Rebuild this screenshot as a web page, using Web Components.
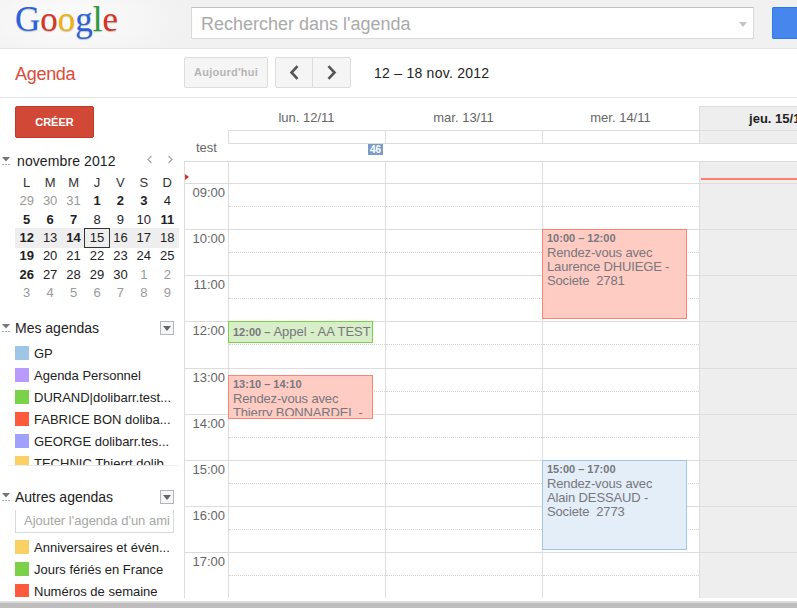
<!DOCTYPE html>
<html lang="fr">
<head>
<meta charset="utf-8">
<title>Agenda</title>
<style>
  html, body { margin: 0; height: 608px; overflow: hidden; background: #fff; }
  body { font-family: "Liberation Sans", Arial, sans-serif; font-size: 13px; color: #222; }
</style>
</head>
<body>
<g-app></g-app>

<script>
class GTopbar extends HTMLElement {
  connectedCallback() {
    this.attachShadow({ mode: 'open' });
    this.shadowRoot.innerHTML = `
      <style>
        :host {
          display: flex;
          box-sizing: border-box;
          height: 49px;
          padding: 0 0 0 15px;
          overflow: hidden;
          background: radial-gradient(ellipse 120px 50px at 70px 20px, #fcfcfc, #f1f1f1);
          border-bottom: 1px solid #e5e5e5;
        }
        .logo {
          flex: none;
          width: 176px;
          font: 35px/39px "Liberation Serif", serif;
          text-shadow: 0 1px 1px rgba(0, 0, 0, 0.22);
        }
        .search {
          display: flex;
          flex: none;
          align-items: center;
          justify-content: space-between;
          box-sizing: border-box;
          width: 563px;
          height: 32px;
          margin-top: 7px;
          padding: 2px 5px 0 9px;
          background: #fff;
          border: 1px solid #d9d9d9;
          border-top-color: #c0c0c0;
          font-size: 18px;
          color: #aaa;
        }
        .caret {
          width: 0;
          height: 0;
          margin-right: 1px;
          border: 4px solid transparent;
          border-top: 5px solid #c4c4c4;
          border-bottom: 0;
        }
        .go {
          flex: none;
          width: 40px;
          height: 32px;
          margin: 7px 0 0 18px;
          background: #4787ed;
          border-radius: 2px;
          box-shadow: inset 0 0 0 1px #3079ed;
        }
      </style>
      <div class="logo"><span style="color:#2b62d9">G</span><span style="color:#d9341f">o</span><span style="color:#f0b20f">o</span><span style="color:#2b62d9">g</span><span style="color:#2d9a3e">l</span><span style="color:#d9341f">e</span></div>
      <div class="search"><span>Rechercher dans l'agenda</span><i class="caret"></i></div>
      <div class="go"></div>
    `;
  }
}

class GSubbar extends HTMLElement {
  connectedCallback() {
    this.attachShadow({ mode: 'open' });
    this.shadowRoot.innerHTML = `
      <style>
        :host {
          display: flex;
          align-items: center;
          box-sizing: border-box;
          height: 49px;
          padding: 0 0 2px 15px;
          background: #fff;
          border-bottom: 1px solid #e5e5e5;
        }
        .name {
          width: 169px;
          margin-top: 5px;
          font-size: 18px;
          letter-spacing: -0.3px;
          color: #dd4b39;
        }
        .btn {
          display: flex;
          align-items: center;
          justify-content: center;
          box-sizing: border-box;
          height: 31px;
          background: #f5f5f5;
          border: 1px solid #dcdcdc;
          border-radius: 2px;
        }
        .today {
          width: 84px;
          font-size: 11px;
          font-weight: bold;
          letter-spacing: 0.25px;
          color: #b5b5b5;
        }
        .nav { width: 38px; margin-left: 7px; border-radius: 2px 0 0 2px; }
        .nav + .nav { margin-left: -1px; width: 39px; border-radius: 0 2px 2px 0; }
        .date {
          margin: 2px 0 0 23px;
          font-size: 14px;
          letter-spacing: 0.25px;
          color: #222;
        }
      </style>
      <div class="name">Agenda</div>
      <div class="btn today">Aujourd'hui</div>
      <div class="btn nav"><svg width="10" height="15" viewBox="0 0 10 15"><path d="M8.5 1.2 2.5 7.5l6 6.3" fill="none" stroke="#555" stroke-width="2.6"/></svg></div>
      <div class="btn nav"><svg width="10" height="15" viewBox="0 0 10 15"><path d="M1.5 1.2l6 6.3-6 6.3" fill="none" stroke="#555" stroke-width="2.6"/></svg></div>
      <div class="date">12 – 18 nov. 2012</div>
    `;
  }
}

class GMinical extends HTMLElement {
  connectedCallback() {
    // [jour, classe] : o = autre mois, b = gras, t = aujourd'hui
    const weeks = [
      ['29o', '30o', '31o', '1b', '2b', '3b', '4'],
      ['5b', '6b', '7b', '8', '9', '10', '11b'],
      ['12b', '13', '14b', '15t', '16', '17', '18'],
      ['19b', '20', '21', '22', '23', '24', '25'],
      ['26b', '27', '28', '29', '30', '1o', '2o'],
      ['3o', '4o', '5o', '6o', '7o', '8o', '9o']
    ];
    const rows = weeks.map((week, i) => {
      const cells = week.map(d => {
        const num = parseInt(d, 10);
        const cls = d.replace(String(num), '');
        return `<span class="${cls}">${num}</span>`;
      }).join('');
      return `<div class="row ${i === 2 ? 'cur' : ''}">${cells}</div>`;
    }).join('');

    this.attachShadow({ mode: 'open' });
    this.shadowRoot.innerHTML = `
      <style>
        :host {
          display: block;
          margin-top: 14px;
        }
        .head {
          display: flex;
          align-items: center;
          height: 18px;
          padding-left: 2px;
          margin-bottom: 4px;
          font-size: 14px;
          color: #222;
        }
        .head svg { flex: none; }
        .title { flex: 1; margin-left: 7px; letter-spacing: 0.1px; }
        .arrows { display: flex; gap: 14px; margin-right: 10px; margin-top: -4px; }
        .row {
          display: grid;
          grid-template-columns: repeat(7, 1fr);
          width: 164px;
          height: 18.34px;
          margin-left: 15px;
          line-height: 18px;
          text-align: center;
          color: #222;
        }
        .row span { display: block; }
        .days { color: #333; font-size: 13px; }
        .cur { background: #eee; box-shadow: 0 1px #eee, 0 -1px #eee; }
        .o { color: #999; }
        .b { font-weight: bold; }
        .t { outline: 1px solid #333; }
      </style>
      <div class="head">
        <svg width="8" height="10" viewBox="0 0 8 10"><path d="M0 1h8L4 5.5z" fill="#777"/><path d="M0 8.5h8" stroke="#aaa" stroke-dasharray="2 1"/></svg>
        <span class="title">novembre 2012</span>
        <div class="arrows">
          <svg width="7" height="9" viewBox="0 0 7 9"><path d="M5.5 1 2 4.5 5.5 8" fill="none" stroke="#aaa" stroke-width="1.4"/></svg>
          <svg width="7" height="9" viewBox="0 0 7 9"><path d="M1.5 1 5 4.5 1.5 8" fill="none" stroke="#aaa" stroke-width="1.4"/></svg>
        </div>
      </div>
      <div class="row days"><span>L</span><span>M</span><span>M</span><span>J</span><span>V</span><span>S</span><span>D</span></div>
      ${rows}
    `;
  }
}

class GCalSection extends HTMLElement {
  connectedCallback() {
    this.attachShadow({ mode: 'open' });
    this.shadowRoot.innerHTML = `
      <style>
        :host {
          display: block;
          margin-top: var(--top, 0);
        }
        .head {
          display: flex;
          align-items: center;
          height: 14px;
          padding-left: 2px;
          font-size: 14px;
          line-height: 14px;
          color: #222;
        }
        .head > svg { flex: none; margin-right: 5px; }
        .title { flex: 1; }
        .menu {
          display: flex;
          align-items: center;
          justify-content: center;
          box-sizing: border-box;
          width: 14px;
          height: 14px;
          margin-right: 10px;
          background: #f6f6f6;
          border: 1px solid #b4b4bc;
        }
        .menu i {
          width: 0;
          height: 0;
          border: 4px solid transparent;
          border-top: 5px solid #666;
          border-bottom: 0;
        }
      </style>
      <div class="head">
        <svg width="8" height="10" viewBox="0 0 8 10"><path d="M0 1h8L4 5.5z" fill="#777"/><path d="M0 8.5h8" stroke="#aaa" stroke-dasharray="2 1"/></svg>
        <span class="title">${this.getAttribute('label')}</span>
        <div class="menu"><i></i></div>
      </div>
      <slot></slot>
    `;
  }
}

class GCalItem extends HTMLElement {
  connectedCallback() {
    this.attachShadow({ mode: 'open' });
    this.shadowRoot.innerHTML = `
      <style>
        :host {
          display: flex;
          align-items: center;
          height: 22px;
          padding-left: 15px;
          white-space: nowrap;
          font-size: 13px;
          color: #222;
        }
        .sw {
          flex: none;
          width: 14px;
          height: 14px;
          margin-right: 5px;
          background: ${this.getAttribute('color')};
        }
      </style>
      <span class="sw"></span><slot></slot>
    `;
  }
}

class GSidebar extends HTMLElement {
  connectedCallback() {
    this.attachShadow({ mode: 'open' });
    this.shadowRoot.innerHTML = `
      <style>
        :host {
          display: block;
          flex: none;
          box-sizing: border-box;
          width: 184px;
          height: 499px;
          padding-top: 8px;
          overflow: hidden;
        }
        .create {
          display: flex;
          align-items: center;
          justify-content: center;
          box-sizing: border-box;
          width: 79px;
          height: 32px;
          margin-left: 15px;
          background: #d14836;
          border: 1px solid #c53727;
          border-radius: 2px;
          font-size: 11px;
          font-weight: bold;
          color: #fff;
        }
        .scroll {
          height: 123px;
          margin-top: 7px;
          overflow: hidden;
        }
        .fade {
          height: 1px;
          margin: 0 4px 0 8px;
          background: linear-gradient(90deg, #f4f4f4, #e2e2e2 20%, #e2e2e2 80%, #f4f4f4);
        }
        .add {
          box-sizing: border-box;
          width: 159px;
          height: 23px;
          margin: 6px 0 3px 15px;
          padding-left: 8px;
          border: 1px solid #d9d9d9;
          border-top: 0;
          line-height: 22px;
          font-size: 13px;
          color: #a6a6a6;
          white-space: nowrap;
          overflow: hidden;
        }
        g-calsection.mine { --top: 19px; }
        g-calsection.other { --top: 24px; }
      </style>
      <div class="create">CRÉER</div>
      <g-minical></g-minical>
      <g-calsection class="mine" label="Mes agendas">
        <div class="scroll">
          <g-calitem color="#9fc6e7">GP</g-calitem>
          <g-calitem color="#b99aff">Agenda Personnel</g-calitem>
          <g-calitem color="#7bd148">DURAND|dolibarr.test...</g-calitem>
          <g-calitem color="#ff5a3c">FABRICE BON doliba...</g-calitem>
          <g-calitem color="#a0a0ff">GEORGE dolibarr.tes...</g-calitem>
          <g-calitem color="#fad165">TECHNIC Thierrt dolib</g-calitem>
        </div>
        <div class="fade"></div>
      </g-calsection>
      <g-calsection class="other" label="Autres agendas">
        <div class="add">Ajouter l'agenda d'un ami</div>
        <g-calitem color="#fad165">Anniversaires et évén...</g-calitem>
        <g-calitem color="#7bd148">Jours fériés en France</g-calitem>
        <g-calitem color="#ff5a3c">Numéros de semaine</g-calitem>
      </g-calsection>
    `;
  }
}

// hauteur de chaque tranche : la premiere est coupee, 12h-13h fait un pixel de plus
const SLOT_HEIGHTS = [22, 46, 46, 46, 47, 46, 46, 46, 46, 46];

class GWeekCol extends HTMLElement {
  connectedCallback() {
    const slots = SLOT_HEIGHTS.map((h, i) =>
      `<div class="hour" style="height:${h}px">${i ? '<div class="half"></div>' : ''}</div>`
    ).join('');
    this.attachShadow({ mode: 'open' });
    this.shadowRoot.innerHTML = `
      <style>
        :host {
          display: block;
          position: relative;
          flex: none;
          box-sizing: border-box;
          width: 157px;
          border-left: 1px solid #ddd;
        }
        :host([today]) { background: #eee; }
        :host([today]) .half { border-bottom-color: transparent; }
        .hour { box-sizing: border-box; border-top: 1px solid #ddd; }
        .half { box-sizing: border-box; height: 23px; border-bottom: 1px dotted #d4d4d4; }
      </style>
      ${slots}
      <slot></slot>
    `;
  }
}

class GEvent extends HTMLElement {
  connectedCallback() {
    this.attachShadow({ mode: 'open' });
    this.shadowRoot.innerHTML = `
      <style>
        :host {
          display: block;
          position: absolute;
          left: -1px;
          top: ${this.getAttribute('top')}px;
          box-sizing: border-box;
          width: 145px;
          height: ${this.getAttribute('h')}px;
          padding: 1px 4px 2px;
          background: ${this.getAttribute('bg')};
          border: 1px solid ${this.getAttribute('line')};
          overflow: hidden;
          font-size: 13px;
          line-height: 14px;
          letter-spacing: -0.15px;
          color: #77777c;
        }
        :host([inline]) { padding-top: 3px; white-space: nowrap; padding-right: 0; letter-spacing: 0; }
        .clip { height: 100%; overflow: hidden; white-space: pre-wrap; }
        :host([inline]) .clip { white-space: pre; }
        b { font-size: 11px; display: block; margin-bottom: 1px; letter-spacing: 0; }
        :host([inline]) b { display: inline; margin: 0; }
      </style>
      <div class="clip"><b>${this.getAttribute('time')}</b><slot></slot></div>
    `;
  }
}

class GWeek extends HTMLElement {
  connectedCallback() {
    const hours = ['09', '10', '11', '12', '13', '14', '15', '16', '17'];
    const gutter = SLOT_HEIGHTS.map((h, i) => {
      const label = i > 0 && hours[i - 1] ? `${hours[i - 1]}:00` : '';
      return `<div class="tick" style="height:${h}px">${label}</div>`;
    }).join('');

    this.attachShadow({ mode: 'open' });
    this.shadowRoot.innerHTML = `
      <style>
        :host {
          display: block;
          position: relative;
          flex: 1;
          min-width: 0;
          overflow: hidden;
        }
        .top { display: flex; height: 63px; }
        .corner {
          flex: none;
          box-sizing: border-box;
          width: 44px;
          padding: 42px 0 0 12px;
          line-height: 16px;
          color: #666;
        }
        .right { position: relative; flex: none; width: 628px; }
        .labels { display: flex; height: 33px; border-bottom: 0; }
        .label {
          box-sizing: border-box;
          width: 157px;
          height: 33px;
          padding-top: 12px;
          line-height: 16px;
          text-align: center;
          color: #666;
          border-bottom: 1px solid #ddd;
        }
        .label.today {
          height: 25px;
          margin-top: 8px;
          padding-top: 4px;
          background: #eee;
          border-top: 1px solid #ddd;
          border-left: 1px solid #ddd;
          font-weight: bold;
          color: #222;
        }
        .allday { display: flex; height: 12px; border-bottom: 1px solid #ddd; }
        .allday div { box-sizing: border-box; width: 157px; border-left: 1px solid #ddd; }
        .allday .today { background: #eee; }
        .badge {
          position: absolute;
          left: 140px;
          top: 46px;
          width: 15px;
          height: 11px;
          background: #7a9cc6;
          font-size: 10px;
          font-weight: bold;
          line-height: 11px;
          text-align: center;
          color: #fff;
        }
        .body {
          position: relative;
          display: flex;
          height: 437px;
          overflow: hidden;
          border-left: 1px solid #ddd;
        }
        .gutter { flex: none; width: 43px; }
        .tick {
          box-sizing: border-box;
          padding: 1px 3px 0 0;
          border-top: 1px solid #ddd;
          line-height: 16px;
          text-align: right;
          color: #666;
        }
        .marker {
          position: absolute;
          left: 0;
          top: 13px;
          width: 0;
          height: 0;
          border: 3.5px solid transparent;
          border-left: 4px solid #d4342a;
          border-right: 0;
        }
        .now {
          position: absolute;
          left: 516px;
          top: 17px;
          width: 100px;
          height: 2px;
          background: #ff7f6e;
        }
      </style>
      <div class="top">
        <div class="corner">test</div>
        <div class="right">
          <div class="labels">
            <div class="label">lun. 12/11</div>
            <div class="label">mar. 13/11</div>
            <div class="label">mer. 14/11</div>
            <div class="label today">jeu. 15/11</div>
          </div>
          <div class="allday"><div></div><div></div><div></div><div class="today"></div></div>
          <div class="badge">46</div>
        </div>
      </div>
      <div class="body">
        <div class="gutter">${gutter}</div>
        <g-weekcol>
          <g-event inline top="160" h="22" time="12:00 – " bg="#d7eec9" line="#7bd148">Appel - AA TEST</g-event>
          <g-event top="214" h="44" time="13:10 – 14:10" bg="#ffccc4" line="#ff8373">Rendez-vous avec Thierry BONNARDEL - Societe  2781</g-event>
        </g-weekcol>
        <g-weekcol></g-weekcol>
        <g-weekcol>
          <g-event top="68" h="90" time="10:00 – 12:00" bg="#ffccc4" line="#ff8373">Rendez-vous avec Laurence DHUIEGE - Societe  2781</g-event>
          <g-event top="299" h="90" time="15:00 – 17:00" bg="#e3eef8" line="#9fc6e7">Rendez-vous avec Alain DESSAUD - Societe  2773</g-event>
        </g-weekcol>
        <g-weekcol today></g-weekcol>
        <i class="marker"></i>
        <i class="now"></i>
      </div>
    `;
  }
}

class GApp extends HTMLElement {
  connectedCallback() {
    this.attachShadow({ mode: 'open' });
    this.shadowRoot.innerHTML = `
      <style>
        :host {
          display: flex;
          flex-direction: column;
          height: 608px;
          overflow: hidden;
          font-family: "Liberation Sans", Arial, sans-serif;
          font-size: 13px;
        }
        .main { display: flex; height: 503px; }
        .status {
          flex: none;
          box-sizing: border-box;
          height: 7px;
          background: #bdbdbd;
          border-top: 2px solid #dcdcdc;
        }
      </style>
      <g-topbar></g-topbar>
      <g-subbar></g-subbar>
      <div class="main">
        <g-sidebar></g-sidebar>
        <g-week></g-week>
      </div>
      <div class="status"></div>
    `;
  }
}

customElements.define('g-topbar', GTopbar);
customElements.define('g-subbar', GSubbar);
customElements.define('g-minical', GMinical);
customElements.define('g-calsection', GCalSection);
customElements.define('g-calitem', GCalItem);
customElements.define('g-sidebar', GSidebar);
customElements.define('g-weekcol', GWeekCol);
customElements.define('g-event', GEvent);
customElements.define('g-week', GWeek);
customElements.define('g-app', GApp);
</script>
</body>
</html>
